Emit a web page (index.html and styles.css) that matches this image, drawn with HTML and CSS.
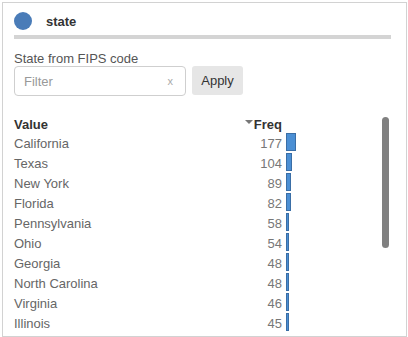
FILE: index.html
```html
<!DOCTYPE html>
<html>
<head>
<meta charset="utf-8">
<link rel="stylesheet" href="styles.css">
</head>
<body>
<div class="panel">
  <div class="head">
    <span class="dot"></span>
    <span class="title">state</span>
  </div>
  <div class="rule"></div>
  <div class="label">State from FIPS code</div>
  <div class="filter-row">
    <div class="filter">
      <span class="placeholder">Filter</span>
      <span class="clear">x</span>
    </div>
    <button class="apply">Apply</button>
  </div>
  <div class="list">
    <div class="table">
      <div class="hrow">
        <div class="hval">Value</div>
        <div class="hfreq"><span class="caret"></span>Freq</div>
        <div></div>
      </div>
      <div class="row"><div class="name">California</div><div class="num">177</div><div class="barcell"><span class="bar" style="width:10px"></span></div></div>
      <div class="row"><div class="name">Texas</div><div class="num">104</div><div class="barcell"><span class="bar" style="width:6px"></span></div></div>
      <div class="row"><div class="name">New York</div><div class="num">89</div><div class="barcell"><span class="bar" style="width:5px"></span></div></div>
      <div class="row"><div class="name">Florida</div><div class="num">82</div><div class="barcell"><span class="bar" style="width:5px"></span></div></div>
      <div class="row"><div class="name">Pennsylvania</div><div class="num">58</div><div class="barcell"><span class="bar" style="width:3px"></span></div></div>
      <div class="row"><div class="name">Ohio</div><div class="num">54</div><div class="barcell"><span class="bar" style="width:3px"></span></div></div>
      <div class="row"><div class="name">Georgia</div><div class="num">48</div><div class="barcell"><span class="bar" style="width:3px"></span></div></div>
      <div class="row"><div class="name">North Carolina</div><div class="num">48</div><div class="barcell"><span class="bar" style="width:3px"></span></div></div>
      <div class="row"><div class="name">Virginia</div><div class="num">46</div><div class="barcell"><span class="bar" style="width:3px"></span></div></div>
      <div class="row"><div class="name">Illinois</div><div class="num">45</div><div class="barcell"><span class="bar" style="width:3px"></span></div></div>
    </div>
    <div class="track"><div class="thumb"></div></div>
  </div>
</div>
</body>
</html>
```
FILE: styles.css
```css
html, body {
  margin: 0;
  padding: 0;
  background: #ffffff;
}
body {
  font-family: "Liberation Sans", Arial, Helvetica, sans-serif;
  font-size: 13px;
  color: #555;
}
.panel {
  box-sizing: border-box;
  margin: 2px 0 0 2px;
  width: 405px;
  height: 335px;
  border: 1px solid #d2d2d2;
  padding: 9px 15px 0 11px;
  overflow: hidden;
}
.head {
  display: flex;
  align-items: center;
  height: 18px;
}
.dot {
  width: 18px;
  height: 18px;
  border-radius: 50%;
  background: #4a7cb8;
  flex: none;
}
.title {
  margin-left: 14px;
  font-weight: bold;
  font-size: 13px;
  color: #333;
}
.rule {
  margin-top: 5px;
  height: 4px;
  background: #d4d4d4;
}
.label {
  margin-top: 12px;
  line-height: 15px;
  color: #555;
}
.filter-row {
  display: flex;
  gap: 6px;
  align-items: flex-start;
}
.filter {
  box-sizing: border-box;
  width: 172px;
  height: 30px;
  border: 1px solid #cfcfcf;
  border-radius: 4px;
  display: flex;
  align-items: center;
  padding: 0 12px 0 9px;
}
.placeholder {
  color: #999;
  flex: 1;
}
.clear {
  color: #aaa;
  font-size: 11px;
}
.apply {
  box-sizing: border-box;
  width: 51px;
  height: 29px;
  border: none;
  border-radius: 3px;
  background: #e6e6e6;
  font-family: inherit;
  font-size: 13px;
  color: #333;
  padding: 0;
}
.list {
  display: flex;
  margin-top: 17px;
}
.table {
  flex: 1;
}
.hrow, .row {
  display: grid;
  grid-template-columns: 230px 38px 1fr;
  height: 20px;
}
.hrow {
  font-weight: bold;
  color: #333;
  padding-top: 3px;
  line-height: 17px;
  box-sizing: border-box;
}
.hfreq {
  text-align: right;
  white-space: nowrap;
}
.caret {
  display: inline-block;
  width: 0;
  height: 0;
  border-left: 4px solid transparent;
  border-right: 4px solid transparent;
  border-top: 4px solid #777;
  vertical-align: 5px;
  margin-right: 1px;
}
.row {
  line-height: 18px;
  padding-top: 2px;
  box-sizing: border-box;
}
.name {
  color: #666;
  white-space: nowrap;
}
.num {
  text-align: right;
  color: #777;
}
.barcell {
  padding-left: 4px;
  margin-top: -2px;
}
.bar {
  display: block;
  box-sizing: border-box;
  height: 18px;
  background: #4b8fd4;
  border: 1px solid #3a6ea6;
}
.track {
  width: 7px;
  margin-right: 2px;
  padding-top: 4px;
  flex: none;
}
.thumb {
  width: 7px;
  height: 131px;
  border-radius: 4px;
  background: #808080;
}
```
